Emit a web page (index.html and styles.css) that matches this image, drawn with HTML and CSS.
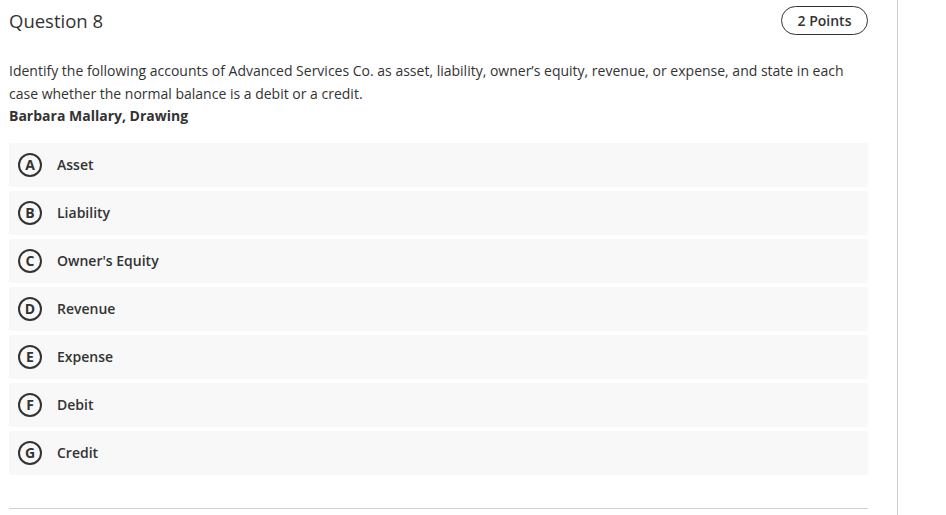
FILE: index.html
```html
<!DOCTYPE html>
<html>
<head>
<meta charset="utf-8">
<link rel="stylesheet" href="styles.css">
</head>
<body>
<div class="page">
  <main class="question">
    <header class="q-head">
      <h1 class="q-title">Question 8</h1>
      <span class="points">2 Points</span>
    </header>
    <div class="prompt">
      <p>Identify the following accounts of Advanced Services Co. as asset, liability, owner’s equity, revenue, or expense, and state in each case whether the normal balance is a debit or a credit.</p>
      <p class="item">Barbara Mallary, Drawing</p>
    </div>
    <ul class="options">
      <li class="option"><span class="letter">A</span><span class="label">Asset</span></li>
      <li class="option"><span class="letter">B</span><span class="label">Liability</span></li>
      <li class="option"><span class="letter">C</span><span class="label">Owner's Equity</span></li>
      <li class="option"><span class="letter">D</span><span class="label">Revenue</span></li>
      <li class="option"><span class="letter">E</span><span class="label">Expense</span></li>
      <li class="option"><span class="letter">F</span><span class="label">Debit</span></li>
      <li class="option"><span class="letter">G</span><span class="label">Credit</span></li>
    </ul>
    <hr class="divider">
  </main>
  <aside class="rail"></aside>
</div>
</body>
</html>
```
FILE: styles.css
```css
* { box-sizing: border-box; }
html, body { margin: 0; padding: 0; background: #fff; }
body {
  font-family: "Open Sans", "Liberation Sans", sans-serif;
  color: #333;
  width: 946px;
  height: 515px;
  overflow: hidden;
}
.page {
  display: flex;
  height: 515px;
}
.question {
  width: 868px;
  flex: none;
  padding-left: 9px;
  padding-top: 6px;
}
.rail {
  flex: none;
  margin-left: 29px;
  width: 1px;
  background: #d0d0d0;
  height: 515px;
}
.q-head {
  display: flex;
  align-items: center;
  justify-content: space-between;
  height: 29px;
}
.q-title {
  margin: 0;
  font-size: 18.5px;
  font-weight: 400;
  color: #333;
}
.points {
  display: inline-flex;
  align-items: center;
  justify-content: center;
  width: 87px;
  height: 29px;
  border: 1px solid #333;
  border-radius: 15px;
  font-size: 14px;
  font-weight: 600;
  color: #333;
}
.prompt {
  margin-top: 25px;
  font-size: 14px;
  line-height: 22.5px;
}
.prompt p { margin: 0; }
.item { font-weight: 700; }
.options {
  list-style: none;
  margin: 15px 0 0;
  padding: 0;
  display: flex;
  flex-direction: column;
  gap: 4px;
}
.option {
  display: flex;
  align-items: center;
  height: 44px;
  background: #f8f8f8;
  border-radius: 2px;
  padding-left: 9px;
}
.letter {
  flex: none;
  width: 24px;
  height: 24px;
  border: 2px solid #333;
  border-radius: 50%;
  display: flex;
  align-items: center;
  justify-content: center;
  font-size: 14px;
  font-weight: 700;
  line-height: 1;
}
.label {
  margin-left: 15px;
  font-size: 14px;
  font-weight: 600;
}
.divider {
  margin: 33px 0 0;
  border: 0;
  border-top: 1px solid #d0d0d0;
}
```
